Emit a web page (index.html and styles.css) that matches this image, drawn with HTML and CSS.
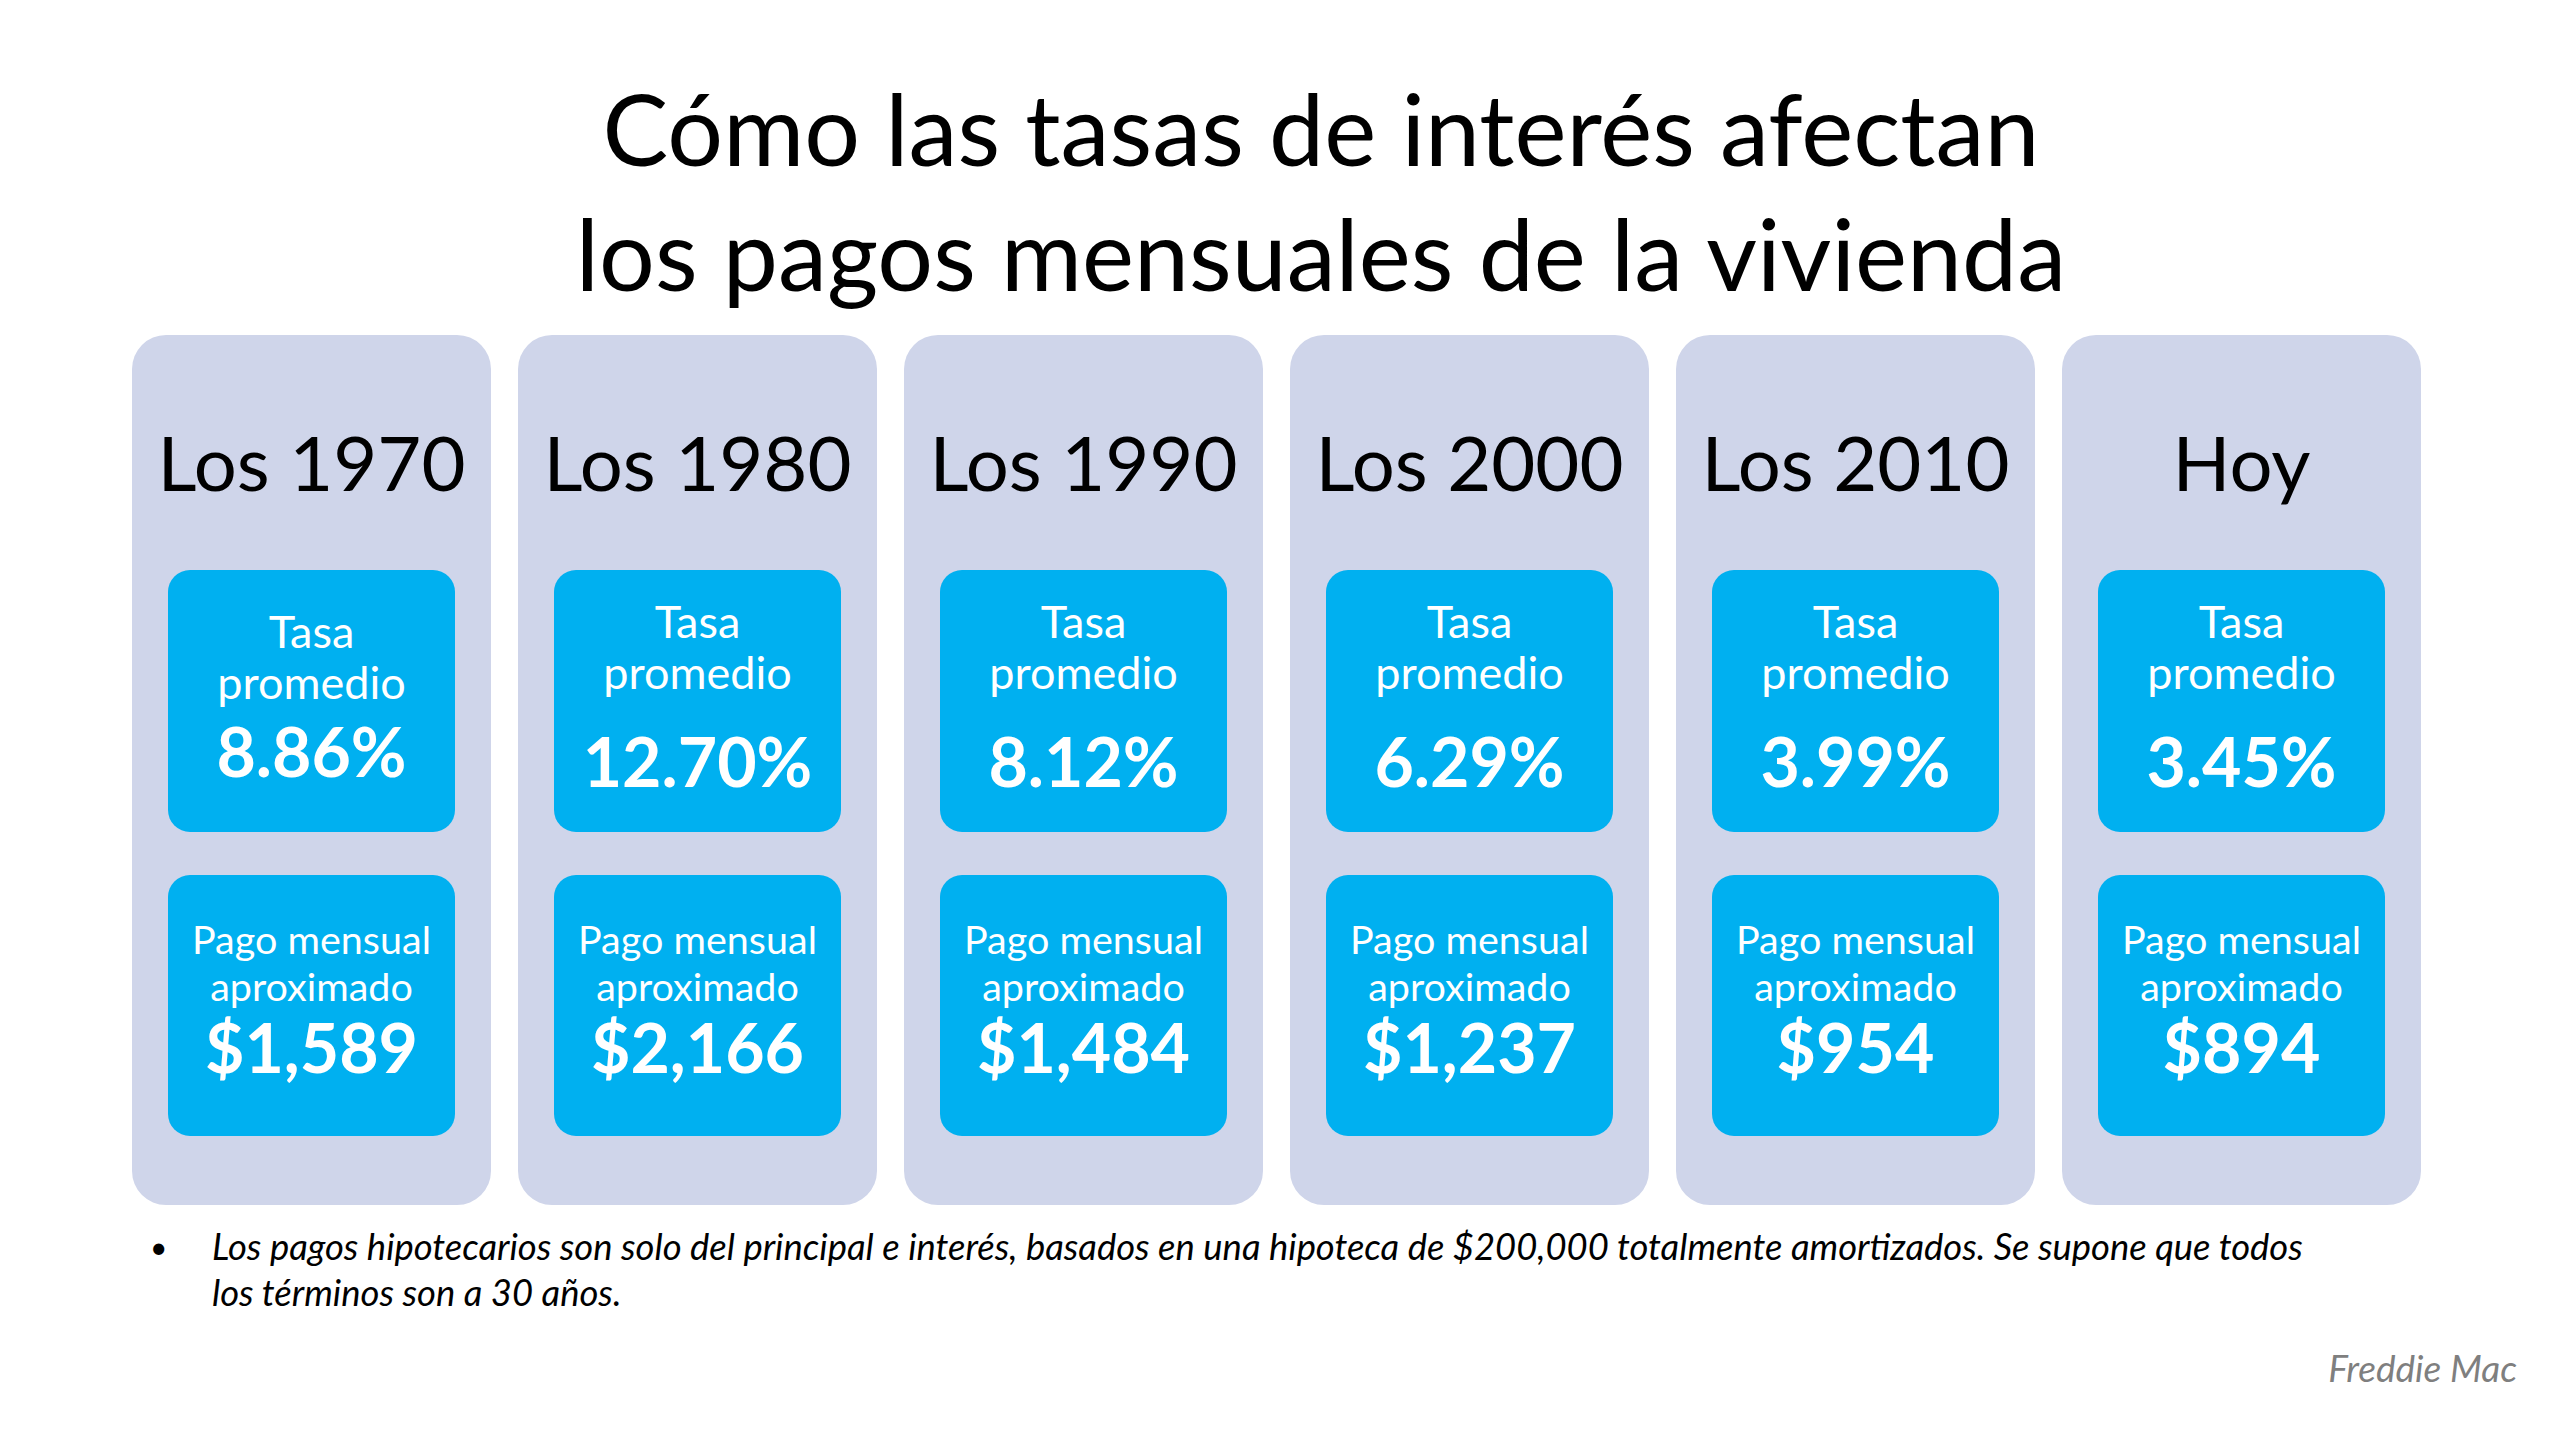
FILE: index.html
```html
<!DOCTYPE html>
<html lang="es">
<head>
<meta charset="utf-8">
<title>Cómo las tasas de interés afectan los pagos mensuales de la vivienda</title>
<link rel="stylesheet" href="styles.css">
</head>
<body>
<div class="slide">
  <h1 class="title">Cómo las tasas de interés afectan<br>los pagos mensuales de la vivienda</h1>
  <div class="columns">
    <div class="col">
      <div class="era">Los 1970</div>
      <div class="box rate tight">
        <div class="label">Tasa</div>
        <div class="label">promedio</div>
        <div class="value">8.86%</div>
      </div>
      <div class="box pay">
        <div class="label">Pago mensual</div>
        <div class="label">aproximado</div>
        <div class="value">$1,589</div>
      </div>
    </div>
    <div class="col">
      <div class="era">Los 1980</div>
      <div class="box rate">
        <div class="label">Tasa</div>
        <div class="label">promedio</div>
        <div class="value">12.70%</div>
      </div>
      <div class="box pay">
        <div class="label">Pago mensual</div>
        <div class="label">aproximado</div>
        <div class="value">$2,166</div>
      </div>
    </div>
    <div class="col">
      <div class="era">Los 1990</div>
      <div class="box rate">
        <div class="label">Tasa</div>
        <div class="label">promedio</div>
        <div class="value">8.12%</div>
      </div>
      <div class="box pay">
        <div class="label">Pago mensual</div>
        <div class="label">aproximado</div>
        <div class="value">$1,484</div>
      </div>
    </div>
    <div class="col">
      <div class="era">Los 2000</div>
      <div class="box rate">
        <div class="label">Tasa</div>
        <div class="label">promedio</div>
        <div class="value">6.29%</div>
      </div>
      <div class="box pay">
        <div class="label">Pago mensual</div>
        <div class="label">aproximado</div>
        <div class="value">$1,237</div>
      </div>
    </div>
    <div class="col">
      <div class="era">Los 2010</div>
      <div class="box rate">
        <div class="label">Tasa</div>
        <div class="label">promedio</div>
        <div class="value">3.99%</div>
      </div>
      <div class="box pay">
        <div class="label">Pago mensual</div>
        <div class="label">aproximado</div>
        <div class="value">$954</div>
      </div>
    </div>
    <div class="col">
      <div class="era">Hoy</div>
      <div class="box rate">
        <div class="label">Tasa</div>
        <div class="label">promedio</div>
        <div class="value">3.45%</div>
      </div>
      <div class="box pay">
        <div class="label">Pago mensual</div>
        <div class="label">aproximado</div>
        <div class="value">$894</div>
      </div>
    </div>
  </div>
  <div class="note">
    <span class="bullet">•</span>
    <p class="note-text">Los pagos hipotecarios son solo del principal e interés, basados en una hipoteca de $200,000 totalmente amortizados. Se supone que todos<br>los términos son a 30 años.</p>
  </div>
  <div class="source">Freddie Mac</div>
</div>
</body>
</html>
```

FILE: styles.css
```css
html, body {
  margin: 0;
  padding: 0;
  background: #ffffff;
}

.slide {
  width: 2560px;
  height: 1440px;
  box-sizing: border-box;
  font-family: "Lato", "Open Sans", sans-serif;
  color: #000000;
  padding-top: 66px;
}

.title {
  margin: 0;
  padding-left: 82px;
  text-align: center;
  font-weight: 400;
  font-size: 98.5px;
  line-height: 125px;
  height: 250px;
}

.columns {
  display: flex;
  gap: 27px;
  padding-left: 132px;
  margin-top: 19px;
}

.col {
  width: 359px;
  height: 870px;
  background: #cfd5ea;
  border-radius: 34px;
  display: flex;
  flex-direction: column;
  align-items: center;
  box-sizing: border-box;
  padding-top: 82px;
}

.era {
  font-size: 76px;
  line-height: 90px;
  height: 90px;
  margin-bottom: 63px;
  white-space: nowrap;
}

.box {
  width: 287px;
  background: #00b0f0;
  border-radius: 22px;
  color: #ffffff;
  text-align: center;
  box-sizing: border-box;
}

.rate {
  height: 262px;
  padding-top: 26px;
}

.rate .label {
  font-size: 45px;
  line-height: 51px;
}

.rate .value {
  margin-top: 23px;
  font-size: 68px;
  font-weight: 700;
  line-height: 80px;
}

.rate.tight {
  padding-top: 36px;
}

.rate.tight .value {
  margin-top: 3px;
}

.pay {
  height: 261px;
  margin-top: 43px;
  padding-top: 40px;
}

.pay .label {
  font-size: 39.5px;
  line-height: 47px;
}

.pay .value {
  margin-top: 3px;
  font-size: 68px;
  font-weight: 700;
  line-height: 70px;
}

.note {
  display: flex;
  margin-top: 18px;
  padding-left: 150px;
}

.bullet {
  width: 62px;
  font-size: 30px;
  line-height: 46px;
}

.note-text {
  margin: 0;
  font-style: italic;
  font-size: 36.4px;
  line-height: 46px;
  white-space: nowrap;
}

.source {
  margin-top: 32px;
  text-align: right;
  padding-right: 43px;
  font-style: italic;
  font-size: 37px;
  line-height: 42px;
  color: #7f7f7f;
}
```
